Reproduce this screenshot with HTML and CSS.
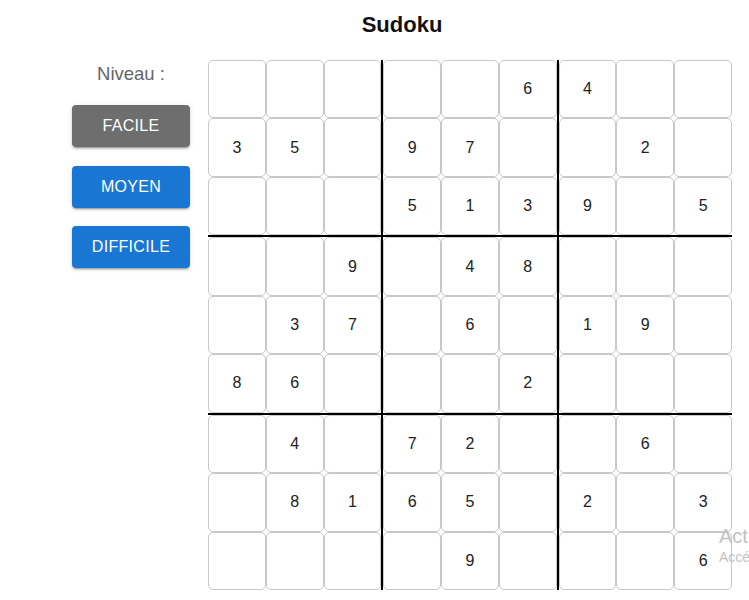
FILE: index.html
```html
<!DOCTYPE html>
<html lang="fr">
<head>
<meta charset="utf-8">
<title>Sudoku</title>
<link rel="stylesheet" href="styles.css">
</head>
<body>
<div class="page">
  <h1 class="title">Sudoku</h1>
  <div class="main">
    <aside class="panel">
      <div class="label">Niveau :</div>
      <button class="btn btn-active">FACILE</button>
      <button class="btn">MOYEN</button>
      <button class="btn">DIFFICILE</button>
    </aside>
    <div class="board">
      <div class="block">
        <div class="cell"></div><div class="cell"></div><div class="cell"></div>
        <div class="cell">3</div><div class="cell">5</div><div class="cell"></div>
        <div class="cell"></div><div class="cell"></div><div class="cell"></div>
      </div>
      <div class="block">
        <div class="cell"></div><div class="cell"></div><div class="cell">6</div>
        <div class="cell">9</div><div class="cell">7</div><div class="cell"></div>
        <div class="cell">5</div><div class="cell">1</div><div class="cell">3</div>
      </div>
      <div class="block">
        <div class="cell">4</div><div class="cell"></div><div class="cell"></div>
        <div class="cell"></div><div class="cell">2</div><div class="cell"></div>
        <div class="cell">9</div><div class="cell"></div><div class="cell">5</div>
      </div>
      <div class="block">
        <div class="cell"></div><div class="cell"></div><div class="cell">9</div>
        <div class="cell"></div><div class="cell">3</div><div class="cell">7</div>
        <div class="cell">8</div><div class="cell">6</div><div class="cell"></div>
      </div>
      <div class="block">
        <div class="cell"></div><div class="cell">4</div><div class="cell">8</div>
        <div class="cell"></div><div class="cell">6</div><div class="cell"></div>
        <div class="cell"></div><div class="cell"></div><div class="cell">2</div>
      </div>
      <div class="block">
        <div class="cell"></div><div class="cell"></div><div class="cell"></div>
        <div class="cell">1</div><div class="cell">9</div><div class="cell"></div>
        <div class="cell"></div><div class="cell"></div><div class="cell"></div>
      </div>
      <div class="block">
        <div class="cell"></div><div class="cell">4</div><div class="cell"></div>
        <div class="cell"></div><div class="cell">8</div><div class="cell">1</div>
        <div class="cell"></div><div class="cell"></div><div class="cell"></div>
      </div>
      <div class="block">
        <div class="cell">7</div><div class="cell">2</div><div class="cell"></div>
        <div class="cell">6</div><div class="cell">5</div><div class="cell"></div>
        <div class="cell"></div><div class="cell">9</div><div class="cell"></div>
      </div>
      <div class="block">
        <div class="cell"></div><div class="cell">6</div><div class="cell"></div>
        <div class="cell">2</div><div class="cell"></div><div class="cell">3</div>
        <div class="cell"></div><div class="cell"></div><div class="cell">6</div>
      </div>
    </div>
  </div>
</div>
<div class="watermark">
  <div class="wm-big">Act</div>
  <div class="wm-small">Accé</div>
</div>
</body>
</html>
```
FILE: styles.css
```css
html, body {
  margin: 0;
  padding: 0;
  background: #fff;
  overflow: hidden;
}
body {
  font-family: "Liberation Sans", Arial, sans-serif;
  color: #222;
  width: 749px;
  height: 600px;
  position: relative;
}
.page {
  margin-left: 72px;
  width: 660px;
}
.title {
  margin: 0;
  padding-top: 12px;
  height: 60px;
  box-sizing: border-box;
  font-size: 22px;
  line-height: 26px;
  font-weight: bold;
  text-align: center;
  color: #111;
}
.main {
  display: flex;
  gap: 18px;
  align-items: flex-start;
}
.panel {
  width: 118px;
  display: flex;
  flex-direction: column;
  padding-top: 3px;
}
.label {
  text-align: center;
  font-size: 18.5px;
  line-height: 22px;
  color: #666;
  margin-bottom: 20px;
}
.btn {
  height: 42px;
  border: none;
  border-radius: 4px;
  background: #1976d2;
  color: #fff;
  font-family: "Liberation Sans", Arial, sans-serif;
  font-size: 16px;
  letter-spacing: 0.3px;
  margin-bottom: 18.5px;
  padding: 0;
  box-shadow: 0 3px 1px -2px rgba(0,0,0,0.2), 0 2px 2px 0 rgba(0,0,0,0.14), 0 1px 5px 0 rgba(0,0,0,0.12);
}
.btn-active {
  background: #6e6e6e;
}
.board {
  display: grid;
  grid-template-columns: repeat(3, 173.33px);
  grid-template-rows: repeat(3, 175.33px);
  gap: 2px;
  background: #000;
  width: 524px;
  height: 530px;
}
.block {
  background: #fff;
  display: grid;
  grid-template-columns: repeat(3, 1fr);
  grid-template-rows: repeat(3, 1fr);
}
.cell {
  border: 1px solid #c8c8c8;
  border-radius: 5px;
  display: flex;
  align-items: center;
  justify-content: center;
  font-size: 16px;
  color: #222;
  background: #fff;
}
.watermark {
  position: absolute;
  left: 719px;
  top: 524px;
  white-space: nowrap;
  color: #c2c2c2;
  font-family: "Liberation Sans", Arial, sans-serif;
}
.wm-big {
  font-size: 20px;
  line-height: 24px;
}
.wm-small {
  font-size: 14px;
  line-height: 18px;
}
```
